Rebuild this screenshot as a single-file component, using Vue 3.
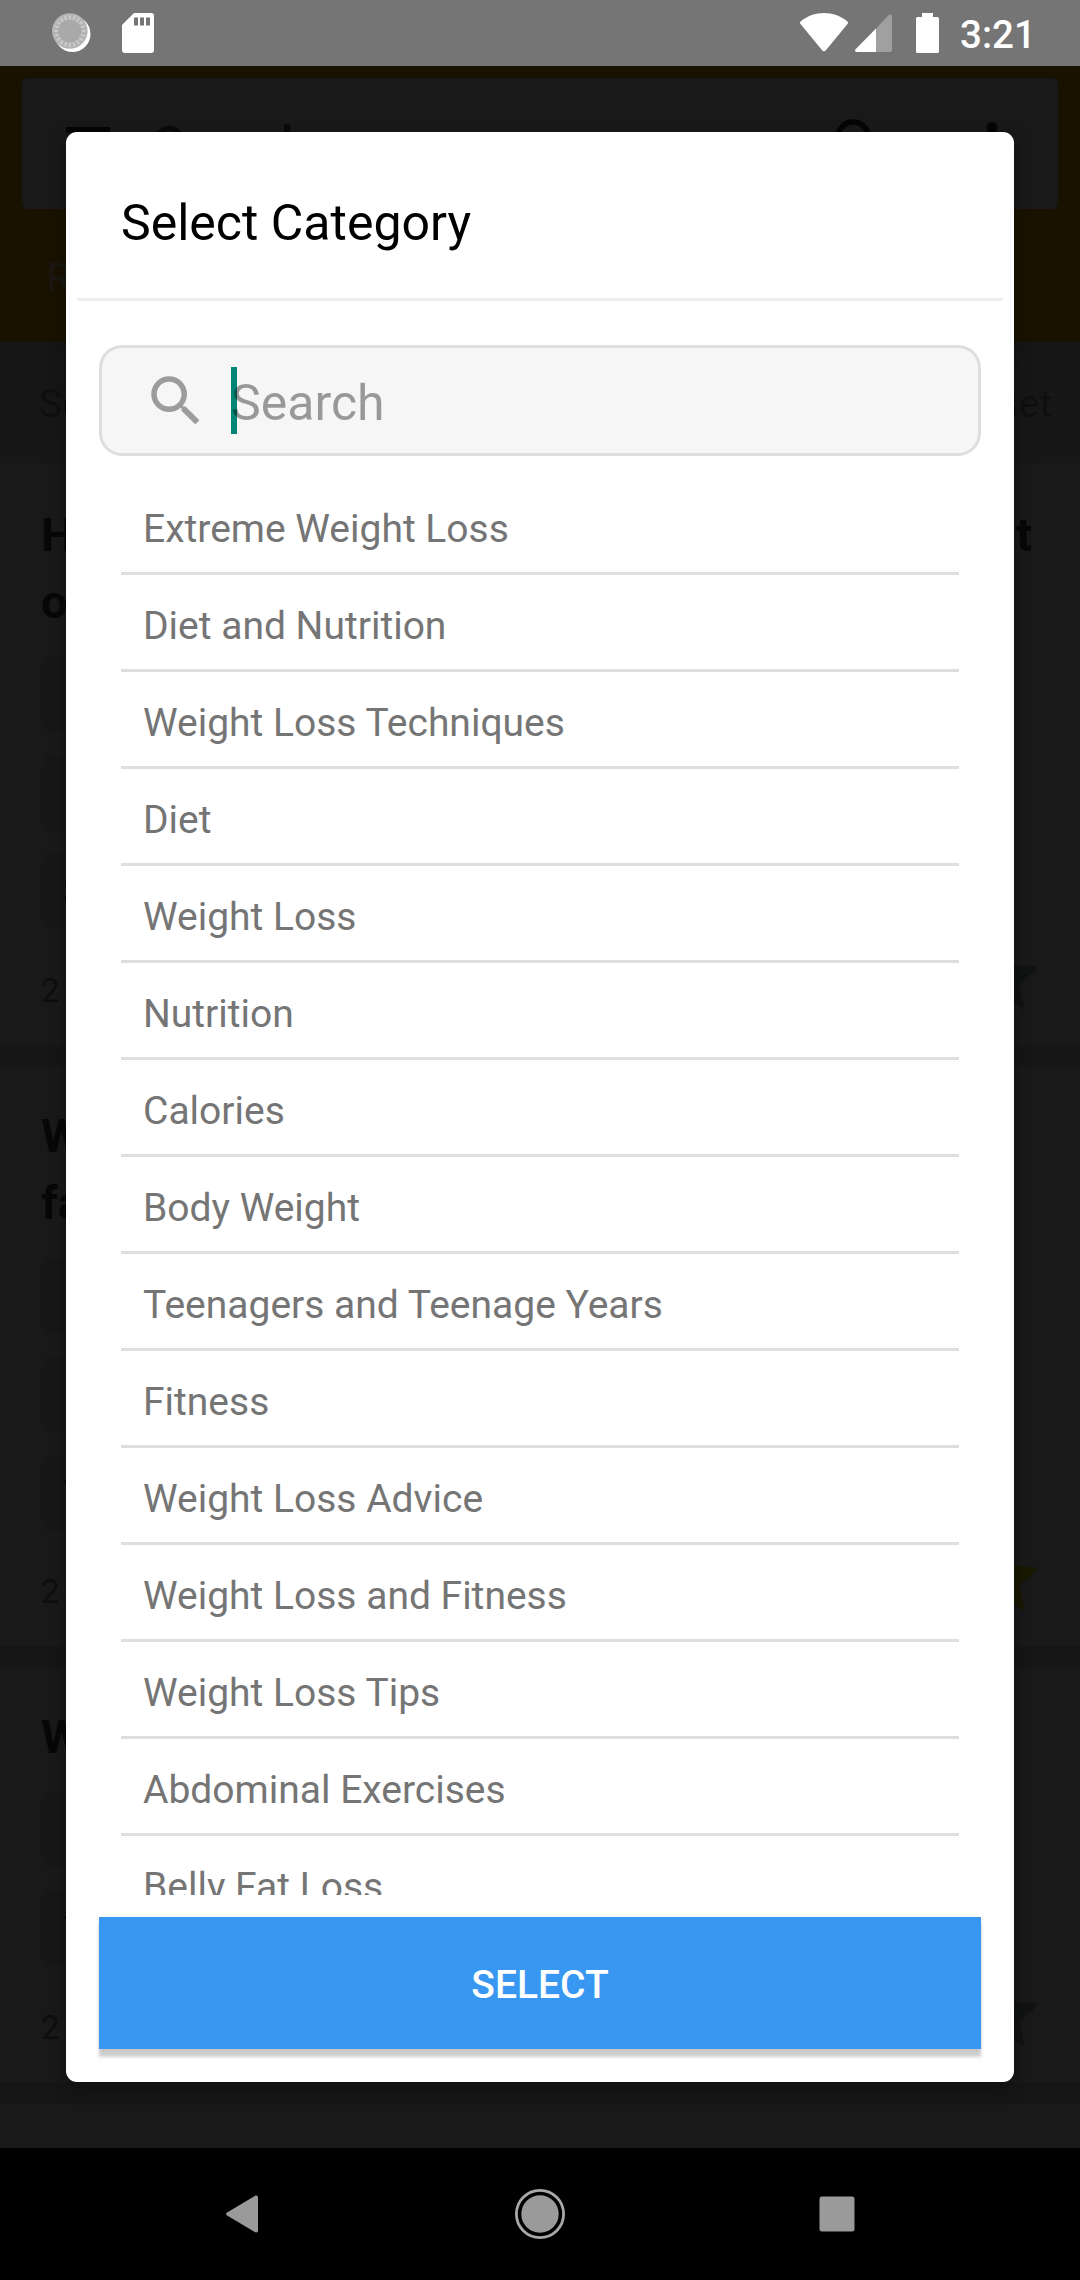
<script setup>
import { ref } from 'vue'

const categories = ref([
  'Extreme Weight Loss',
  'Diet and Nutrition',
  'Weight Loss Techniques',
  'Diet',
  'Weight Loss',
  'Nutrition',
  'Calories',
  'Body Weight',
  'Teenagers and Teenage Years',
  'Fitness',
  'Weight Loss Advice',
  'Weight Loss and Fitness',
  'Weight Loss Tips',
  'Abdominal Exercises',
  'Belly Fat Loss'
])
const selected = ref('')

// feed items dimmed behind the dialog
const feed = [
  { id: 1, lines: [['H', 't'], ['o', '']], chips: ['', '', 'S'], count: '2', starred: false },
  { id: 2, lines: [['W', ''], ['fa', '']], chips: ['', '', 'T'], count: '2', starred: true },
  { id: 3, lines: [['W', '']], chips: ['', 'T'], count: '2', starred: false }
]

const rays = Array.from({ length: 20 }, (_, i) => i * 18)
</script>

<template>
  <div class="screen">
    <header class="status-bar">
      <div class="status-left">
        <svg class="sync-icon" viewBox="0 0 40 40">
          <circle cx="20.5" cy="21" r="18" fill="#fff" />
          <circle cx="17.8" cy="18" r="17.8" fill="#b4b4b4" />
          <g stroke="#cfcfcf" stroke-width="1.5">
            <line v-for="r in rays" :key="r" x1="17.8" y1="2" x2="17.8" y2="7" :transform="`rotate(${r} 17.8 18)`" />
          </g>
          <circle cx="17.8" cy="18" r="11.5" fill="#a9a9a9" />
        </svg>
        <svg class="sd-icon" viewBox="0 0 32 40">
          <path d="M12 0H29a3 3 0 0 1 3 3V37a3 3 0 0 1-3 3H3a3 3 0 0 1-3-3V12Z" fill="#fff" />
          <path d="M12 4.5h4v8h-4zM18 4.5h4v8h-4zM24 4.5h4v8h-4z" fill="#757575" />
        </svg>
      </div>
      <div class="status-right">
        <svg class="wifi-icon" viewBox="0 0 48 39">
          <path d="M.8 8.2C7.5 2.8 15.5 0 24 0s16.5 2.8 23.2 8.2c.9.7 1 1.8.3 2.7L25.900 37.300c-1.200 1.400-2.600 1.400-3.800 0L.5 10.900C-.2 10-.1 8.900.8 8.200Z" fill="#fff" />
        </svg>
        <svg class="signal-icon" viewBox="0 0 37 38">
          <path d="M21 14.5 33.8 1C35 0 37 .5 37 2.500V35.500a2.500 2.500 0 0 1-2.500 2.500H21Z" fill="#a0a0a0" />
          <path d="M21 14.5V38H1.500C0 38-.5 36.300.6 35.200Z" fill="#fff" />
        </svg>
        <svg class="battery-icon" viewBox="0 0 23 40">
          <path d="M6 0H17V4H21.500A1.500 1.500 0 0 1 23 5.500V38.500A1.500 1.500 0 0 1 21.500 40H1.500A1.500 1.500 0 0 1 0 38.500V5.500A1.500 1.500 0 0 1 1.500 4H6Z" fill="#fff" />
        </svg>
        <span class="clock">3:21</span>
      </div>
    </header>

    <main class="backdrop">
      <div class="toolbar">
        <div class="toolbar-card">
          <svg class="menu-icon" viewBox="0 0 44 33"><path d="M0 0h44v5.500H0zM0 13.700h44v5.500H0zM0 27.500h44V33H0z" /></svg>
          <span class="toolbar-title">Search</span>
          <svg class="tool-icon" viewBox="0 0 24 24"><path d="M15.500 14h-.79l-.28-.27A6.471 6.471 0 0 0 16 9.500 6.500 6.500 0 1 0 9.500 16c1.610 0 3.090-.59 4.230-1.570l.27.28v.79l5 4.990L20.490 19l-4.990-5zm-6 0C7.010 14 5 11.990 5 9.500S7.010 5 9.500 5 14 7.010 14 9.500 11.990 14 9.500 14z" /></svg>
          <svg class="tool-icon" viewBox="0 0 24 24"><circle cx="12" cy="6" r="2" /><circle cx="12" cy="12" r="2" /><circle cx="12" cy="18" r="2" /></svg>
        </div>
        <div class="tab">Re</div>
      </div>
      <div class="filter-row">
        <span>Se</span>
        <span>Reset</span>
      </div>
      <section v-for="item in feed" :key="item.id" class="feed-card">
        <div v-for="(line, i) in item.lines" :key="i" class="feed-title">
          <span>{{ line[0] }}</span>
          <span>{{ line[1] }}</span>
        </div>
        <div class="chips">
          <div v-for="(chip, i) in item.chips" :key="i" class="chip">{{ chip }}</div>
        </div>
        <div class="feed-footer">
          <span>{{ item.count }}</span>
          <svg class="star" :class="{ starred: item.starred }" viewBox="-0.5 -0.5 25 25">
            <path d="M12 17.270 18.180 21l-1.640-7.030L22 9.240l-7.190-.61L12 2 9.190 8.630 2 9.240l5.460 4.730L5.820 21z" />
          </svg>
        </div>
      </section>
    </main>

    <nav class="nav-bar">
      <svg viewBox="0 0 52 52"><path d="M10.500 24.300 37.800 8C39.500 7 41 7.800 41 9.500V42.500c0 1.700-1.500 2.500-3.200 1.500L10.500 27.700c-2-1.200-2-2.200 0-3.400Z" fill="#9a9a9a" /></svg>
      <svg viewBox="0 0 52 52">
        <circle cx="26" cy="26" r="23.6" fill="none" stroke="#a8a8a8" stroke-width="2.8" />
        <circle cx="26" cy="26" r="18.7" fill="#9a9a9a" />
      </svg>
      <svg viewBox="0 0 52 52"><rect x="8.5" y="8.5" width="35" height="35" rx="2.5" fill="#9a9a9a" /></svg>
    </nav>

    <div class="dialog">
      <h2 class="dialog-title">Select Category</h2>
      <div class="search-box">
        <svg class="search-icon" viewBox="0 0 24 24"><path d="M15.500 14h-.79l-.28-.27A6.471 6.471 0 0 0 16 9.500 6.500 6.500 0 1 0 9.500 16c1.610 0 3.090-.59 4.230-1.570l.27.28v.79l5 4.990L20.490 19l-4.990-5zm-6 0C7.010 14 5 11.990 5 9.500S7.010 5 9.500 5 14 7.010 14 9.500 11.990 14 9.500 14z" /></svg>
        <div class="search-field">
          <span class="caret"></span>
          <span class="hint">Search</span>
        </div>
      </div>
      <ul class="category-list">
        <li v-for="c in categories" :key="c" class="category-item" @click="selected = c">{{ c }}</li>
      </ul>
      <button class="select-btn">SELECT</button>
    </div>
  </div>
</template>

<style>
body {
  margin: 0;
  background: #000;
}
</style>

<style scoped>
.screen {
  position: relative;
  width: 1080px;
  height: 2280px;
  display: flex;
  flex-direction: column;
  overflow: hidden;
  font-family: Roboto, "Noto Sans", sans-serif;
}
.status-bar {
  box-sizing: border-box;
  height: 66px;
  flex: none;
  display: flex;
  justify-content: space-between;
  padding: 13px 50px 0 52px;
  background: #757575;
}
.status-left,
.status-right {
  display: flex;
  align-items: flex-start;
}
.sync-icon {
  width: 40px;
  height: 40px;
  margin-right: 30px;
}
.sd-icon {
  width: 32px;
  height: 40px;
}
.wifi-icon {
  width: 48px;
  height: 39px;
  margin-right: 7px;
}
.signal-icon {
  width: 37px;
  height: 38px;
  margin: 1px 24px 0 0;
}
.battery-icon {
  width: 23px;
  height: 40px;
  margin-right: 21px;
}
.clock {
  width: 70px;
  color: #fff;
  font-size: 38.5px;
  font-weight: 500;
  line-height: 44px;
  white-space: nowrap;
}

.backdrop {
  flex: 1;
  min-height: 0;
  overflow: hidden;
  background: #191919;
}
.toolbar {
  box-sizing: border-box;
  height: 276px;
  padding: 12px 22px 0;
  background: #191200;
}
.toolbar-card {
  box-sizing: border-box;
  height: 131px;
  display: flex;
  align-items: center;
  padding: 0 33px 0 44px;
  border-radius: 6px;
  background: #191919;
  fill: #050505;
}
.menu-icon {
  width: 44px;
  height: 33px;
}
.toolbar-title {
  flex: 1;
  margin-left: 44px;
  padding-top: 3px;
  font-size: 50px;
  font-weight: 500;
  color: #090909;
}
.tool-icon {
  width: 66px;
  height: 66px;
}
.tool-icon + .tool-icon {
  margin-left: 66px;
}
.tab {
  margin: 44px 0 0 24px;
  font-size: 41px;
  line-height: 50px;
  color: #1a1712;
}
.filter-row {
  box-sizing: border-box;
  height: 124px;
  display: flex;
  justify-content: space-between;
  padding: 39px 28px 0 39px;
  background: linear-gradient(#161616, #171717);
  background-size: 100% 121px;
  background-repeat: no-repeat;
  font-size: 39px;
  line-height: 46px;
  color: #0f0f0f;
}
.feed-card {
  padding: 34.5px 43px 0 41px;
  border-bottom: 22px solid #161616;
}
.feed-title {
  display: flex;
  justify-content: space-between;
  padding-right: 5px;
  font-size: 47px;
  font-weight: 700;
  line-height: 67px;
  color: #070707;
}
.chips {
  display: flex;
  flex-direction: column;
  gap: 23.5px;
  margin-top: 22.5px;
}
.chip {
  box-sizing: border-box;
  width: 640px;
  height: 75px;
  padding-left: 22px;
  border-radius: 11px;
  background: #171717;
  font-size: 33px;
  line-height: 75px;
  color: #0c0c0c;
}
.feed-footer {
  height: 116px;
  display: flex;
  justify-content: space-between;
  font-size: 33px;
  line-height: 123px;
  color: #0e0e0e;
}
.star {
  width: 82.5px;
  height: 82.5px;
  margin: 7px -6px 0 0;
  fill: #101312;
  stroke: #101312;
  stroke-width: 1;
  stroke-linejoin: round;
}
.star.starred {
  fill: #191800;
  stroke: #191800;
}

.nav-bar {
  height: 132px;
  flex: none;
  display: flex;
  justify-content: center;
  align-items: center;
  gap: 245px;
  background: #000;
}
.nav-bar svg {
  width: 52px;
  height: 52px;
}

.dialog {
  position: absolute;
  inset: 132px 66px 198px;
  box-sizing: border-box;
  display: flex;
  flex-direction: column;
  padding: 0 33px 33px;
  border-radius: 11px;
  background: #fff;
  box-shadow: 0 6px 18px rgba(0, 0, 0, 0.3);
}
.dialog-title {
  box-sizing: border-box;
  height: 169px;
  flex: none;
  margin: 0 -22px 44px;
  padding: 61px 44px 0;
  border-bottom: 3px solid #eee;
  font-size: 50px;
  font-weight: 400;
  line-height: 60px;
  color: #000;
}
.search-box {
  box-sizing: border-box;
  height: 111px;
  flex: none;
  display: flex;
  padding: 19px 41px 0;
  border: 3px solid #dedede;
  border-radius: 23px;
  background: #f6f6f6;
}
.search-icon {
  width: 66px;
  height: 66px;
  margin-top: 1px;
  fill: #9c9c9c;
}
.search-field {
  position: relative;
  margin-left: 22px;
}
.caret {
  position: absolute;
  left: 0;
  top: 0;
  width: 6px;
  height: 67px;
  background: #008577;
}
.hint {
  position: relative;
  font-size: 50px;
  line-height: 73px;
  color: rgba(0, 0, 0, 0.38);
}
.category-list {
  flex: 1;
  min-height: 0;
  overflow: hidden;
  margin: 22px 22px;
  padding: 0;
  list-style: none;
}
.category-item {
  box-sizing: border-box;
  height: 97px;
  padding: 8px 22px 0;
  border-bottom: 3px solid #dedede;
  font-size: 39px;
  line-height: 86px;
  color: #757575;
}
.select-btn {
  height: 132px;
  flex: none;
  padding: 3px 0 0;
  border: none;
  background: #3897f0;
  box-shadow: 0 8px 3px rgba(0, 0, 0, 0.19), 0 1px 5px rgba(0, 0, 0, 0.08);
  font-family: inherit;
  font-size: 39px;
  font-weight: 500;
  color: #fff;
}
</style>
